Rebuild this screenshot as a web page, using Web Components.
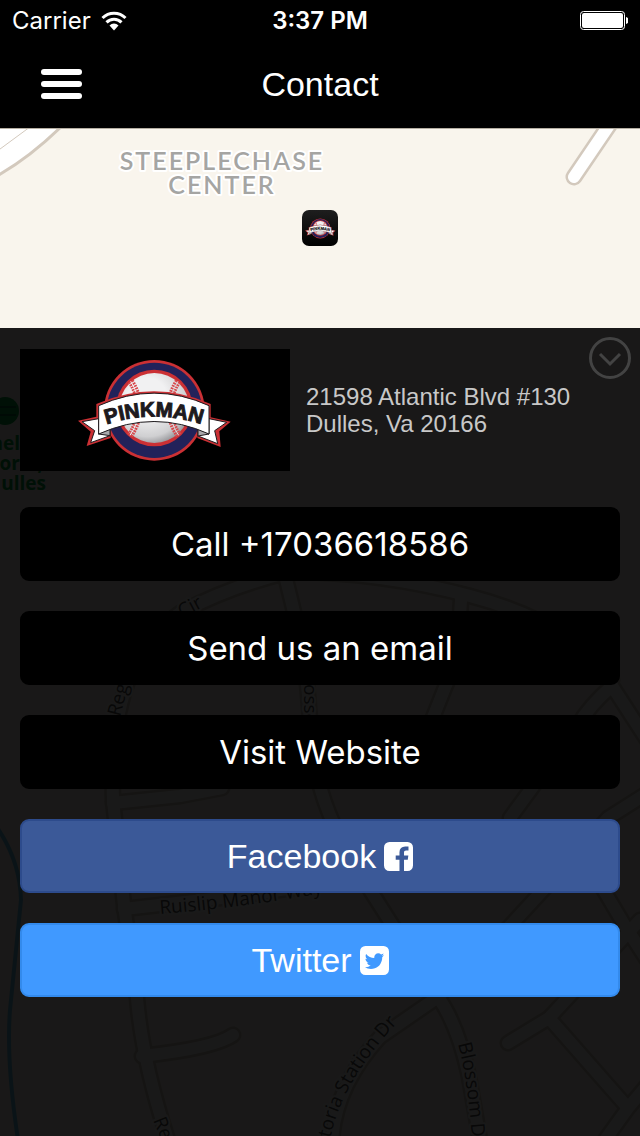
<!DOCTYPE html>
<html lang="en">
<head>
  <meta charset="utf-8">
  <meta name="viewport" content="width=device-width, initial-scale=1">
  <title>Contact</title>
  <style>
    body {
      margin: 0;
      background: #000;
      font-family: "Liberation Sans", Arial, sans-serif;
    }
  </style>
</head>
<body>
  <contact-page>
    <status-bar slot="top" carrier="Carrier" time="3:37 PM"></status-bar>
    <nav-bar slot="top">Contact</nav-bar>
    <street-map slot="map"></street-map>
    <map-pin slot="pin"></map-pin>
    <contact-panel>
      <team-logo slot="logo"></team-logo>
      <span slot="address">21598 Atlantic Blvd #130<br>Dulles, Va 20166</span>
      <action-link href="tel:+17036618586">Call +17036618586</action-link>
      <action-link href="mailto:info@example.com">Send us an email</action-link>
      <action-link href="#website">Visit Website</action-link>
      <action-link href="#facebook" kind="facebook">Facebook</action-link>
      <action-link href="#twitter" kind="twitter">Twitter</action-link>
    </contact-panel>
  </contact-page>

  <script>
    class ContactPage extends HTMLElement {
      constructor() {
        super();
        this.attachShadow({ mode: 'open' });
        this.shadowRoot.innerHTML = `
          <style>
            :host {
              display: flex;
              flex-direction: column;
              min-height: 100vh;
            }

            header {
              position: relative;
              z-index: 1;
              background: #000;
              box-shadow: 0 1px 0 #b5aea2;
            }

            main {
              position: relative;
              flex: 1;
              display: flex;
              flex-direction: column;
              overflow: hidden;
            }

            ::slotted(street-map) {
              position: absolute;
              inset: 0;
            }

            #window {
              position: relative;
              height: 200px;
              display: flex;
              align-items: center;
              justify-content: center;
            }

            ::slotted(contact-panel) {
              position: relative;
              flex: 1;
            }
          </style>

          <header><slot name="top"></slot></header>
          <main>
            <slot name="map"></slot>
            <div id="window"><slot name="pin"></slot></div>
            <slot></slot>
          </main>
        `;
      }
    }

    class StatusBar extends HTMLElement {
      constructor() {
        super();
        this.attachShadow({ mode: 'open' });
        this.shadowRoot.innerHTML = `
          <style>
            :host {
              display: grid;
              grid-template-columns: 1fr auto 1fr;
              align-items: center;
              box-sizing: border-box;
              height: 40px;
              padding: 2px 12px 0;
              color: #fff;
              font: 24px/38px Inter, sans-serif;
            }

            #left {
              display: flex;
              align-items: center;
              gap: 10px;
            }

            #time {
              font-weight: 600;
            }

            #battery {
              justify-self: end;
            }

            svg {
              display: block;
            }
          </style>

          <div id="left">
            <span id="carrier"></span>
            <svg width="26" height="20" viewBox="0 0 26 20" fill="none" stroke="#fff" stroke-width="3">
              <path d="M1.500 7a16.300 16.300 0 0 1 23 0"/>
              <path d="M5.500 11.400a10.500 10.500 0 0 1 15 0"/>
              <path d="M13 19.500l-4.500-5a6.300 6.300 0 0 1 9 0z" fill="#fff" stroke="none"/>
            </svg>
          </div>
          <span id="time"></span>
          <svg id="battery" width="48" height="20" viewBox="0 0 48 20">
            <rect x="0.5" y="0.5" width="44" height="18" rx="3" fill="none" stroke="#fff"/>
            <rect x="2" y="2" width="41" height="15" rx="2" fill="#fff"/>
            <path d="M46 6q2.500 .5 2.500 3.500t-2.500 3.500z" fill="#fff"/>
          </svg>
        `;
      }

      connectedCallback() {
        this.shadowRoot.querySelector('#carrier').textContent = this.getAttribute('carrier');
        this.shadowRoot.querySelector('#time').textContent = this.getAttribute('time');
      }
    }

    class NavBar extends HTMLElement {
      constructor() {
        super();
        this.attachShadow({ mode: 'open' });
        this.shadowRoot.innerHTML = `
          <style>
            :host {
              display: grid;
              grid-template-columns: 1fr auto 1fr;
              align-items: center;
              height: 88px;
              padding: 0 41px;
              color: #fff;
            }

            button {
              display: flex;
              flex-direction: column;
              gap: 6px;
              width: 41px;
              padding: 0;
              border: 0;
              background: none;
              cursor: pointer;
            }

            button i {
              width: 100%;
              height: 6px;
              border-radius: 3px;
              background: #fff;
            }

            h1 {
              margin: 0;
              font-size: 34px;
              font-weight: normal;
            }
          </style>

          <button type="button" aria-label="Menu"><i></i><i></i><i></i></button>
          <h1><slot></slot></h1>
        `;
      }
    }

    class StreetMap extends HTMLElement {
      constructor() {
        super();
        this.attachShadow({ mode: 'open' });

        // every road is drawn twice: a wide casing first, the white surface over it
        const roads = `
          <path d="M574 177L616 115"/>
          <path d="M180 613Q230 586 290 572Q380 572 470 596Q570 622 612 680"/>
          <path d="M285 575L294 612C315 690 305 740 321 790Q334 835 372 893L438 997Q458 1025 469 1077L480 1140"/>
          <path d="M461 600Q458 660 444 690L420 750"/>
          <path d="M180 613Q108 660 113 800L124 905L137 998Q142 1060 168 1140"/>
          <path d="M113 803L180 796L222 788"/>
          <path d="M124 909L230 897L350 880"/>
          <path d="M142 1056Q215 1048 233 1035"/>
          <path d="M612 686Q590 705 578 725L510 818"/>
          <path d="M612 686L660 760"/>
          <path d="M660 785L608 818L580 850L625 926L660 980"/>
          <path d="M580 850L510 926L438 997L380 1037Q336 1085 332 1140"/>
          <path d="M640 920L549 1018L508 1043"/>
          <path d="M549 1018L628 1108L605 1140M628 1108L660 1070"/>
        `;

        this.shadowRoot.innerHTML = `
          <style>
            :host {
              display: block;
              background: #f9f5ed;
            }

            svg {
              display: block;
              width: 100%;
              height: 100%;
            }

            .roads {
              fill: none;
              stroke-linecap: round;
              stroke-linejoin: round;
            }

            text {
              paint-order: stroke;
              stroke: #fff;
              stroke-width: 4px;
              stroke-linejoin: round;
            }

            .district {
              font: 600 25px/24px Lato, sans-serif;
              letter-spacing: 2px;
              fill: #a5a5a3;
              text-anchor: middle;
            }

            .street {
              font: 19px "Open Sans", sans-serif;
              fill: #555;
            }

            .park {
              font: 700 19px "Open Sans", sans-serif;
              fill: #00a03c;
              text-anchor: end;
              stroke: none;
            }
          </style>

          <svg viewBox="0 128 640 1008" preserveAspectRatio="xMidYMin slice">
            <defs>
              <path id="station" d="M329 1147Q338 1080 412 1008"/>
              <path id="blossom" d="M458 1044Q468 1080 473 1150"/>
              <path id="manor" d="M160 914Q240 908 330 892"/>
            </defs>

            <path d="M-5 177Q30 158 66 122L-5 110z" fill="#fff" stroke="#d3c9bd" stroke-width="3"/>
            <path d="M-4 152L34 124" stroke="#d3c9bd" fill="none"/>
            <path d="M-4 826Q20 860 21 900L10 1010Q6 1060 18 1140" stroke="#6bc0e6" stroke-width="4" fill="none"/>
            <g class="roads" stroke="#d3c9bd" stroke-width="17">${roads}</g>
            <g class="roads" stroke="#fff" stroke-width="12">${roads}</g>

            <text class="district" x="222" y="170">STEEPLECHASE</text>
            <text class="district" x="222" y="194">CENTER</text>

            <circle cx="5" cy="411" r="14" fill="#00a03c"/>
            <path d="M-6 407h22M-6 415h22" stroke="#063" stroke-width="2"/>
            <text class="park" x="20" y="450">nel</text>
            <text class="park" x="43" y="470">orts,</text>
            <text class="park" x="46" y="490">ulles</text>

            <text class="street" transform="translate(182 618) rotate(-28)">Cir</text>
            <text class="street" transform="translate(120 717) rotate(-75)">Reg</text>
            <text class="street" transform="translate(304 684) rotate(90)">osso</text>
            <text class="street" transform="translate(153 1120) rotate(68)">Re</text>
            <text class="street"><textPath href="#manor">Ruislip Manor Way</textPath></text>
            <text class="street"><textPath href="#station">ctoria Station Dr</textPath></text>
            <text class="street"><textPath href="#blossom">Blossom D</textPath></text>
          </svg>
        `;
      }
    }

    class TeamLogo extends HTMLElement {
      constructor() {
        super();
        this.attachShadow({ mode: 'open' });
        this.shadowRoot.innerHTML = `
          <style>
            :host {
              display: block;
              width: 155px;
            }

            svg {
              display: block;
              width: 100%;
            }

            text {
              font: 700 62px "Liberation Sans", Arial, sans-serif;
              fill: #1d1a1d;
              stroke: #1d1a1d;
              stroke-width: 3px;
              text-anchor: middle;
            }
          </style>

          <svg viewBox="22 22 465 315" role="img" aria-label="Pinkman">
            <defs>
              <radialGradient id="ball" cx="0.4" cy="0.35" r="0.7">
                <stop offset="0.4" stop-color="#f1f1f2"/>
                <stop offset="0.8" stop-color="#cfcfd1"/>
                <stop offset="1" stop-color="#8f8f93"/>
              </radialGradient>
              <path id="arch" d="M85 229Q250 166 415 229"/>
            </defs>

            <circle cx="251" cy="179" r="151" fill="#cb3034"/>
            <circle cx="251" cy="179" r="143" fill="#22225a"/>
            <circle cx="251" cy="172" r="115" fill="#cb3034"/>
            <circle cx="251" cy="172" r="105" fill="url(#ball)"/>

            <g fill="none" stroke="#d8474b">
              <path d="M180 92Q205 130 204 172Q205 215 178 254" stroke-width="20" stroke-dasharray="5 3"/>
              <path d="M322 92Q297 130 298 172Q297 215 324 254" stroke-width="20" stroke-dasharray="5 3"/>
              <path d="M180 92Q205 130 204 172Q205 215 178 254" stroke="#f1f1f2" stroke-width="3"/>
              <path d="M322 92Q297 130 298 172Q297 215 324 254" stroke="#dedee0" stroke-width="3"/>
            </g>

            <path d="M22 210L77 198L77 160Q251 84 420 160L420 200L480 213L446 242L450 289L380 262L382 232Q251 190 118 232L120 262L48 286L60 243z" fill="#cb3034"/>
            <g stroke="#1d1a1d" stroke-width="3" stroke-linejoin="round">
              <path d="M34 213L84 204V250L118 232V255L60 276L72 240z" fill="#fff"/>
              <path d="M468 215L415 204V250L382 232V256L441 279L432 240z" fill="#fff"/>
              <path d="M84 250L118 232V255z" fill="#a9a9ac"/>
              <path d="M415 250L382 232V256z" fill="#a9a9ac"/>
              <path d="M84 165Q251 90 415 165V250Q251 175 84 250z" fill="#fff"/>
            </g>
            <text><textPath href="#arch" startOffset="50%">PINKMAN</textPath></text>
          </svg>
        `;
      }
    }

    class MapPin extends HTMLElement {
      constructor() {
        super();
        this.attachShadow({ mode: 'open' });
        this.shadowRoot.innerHTML = `
          <style>
            :host {
              display: flex;
              align-items: center;
              justify-content: center;
              width: 36px;
              height: 36px;
              border-radius: 7px;
              background: linear-gradient(#1e1e1e, #000);
            }

            team-logo {
              width: 31px;
            }
          </style>

          <team-logo></team-logo>
        `;
      }
    }

    class ContactPanel extends HTMLElement {
      constructor() {
        super();
        this.attachShadow({ mode: 'open' });
        this.shadowRoot.innerHTML = `
          <style>
            :host {
              display: block;
              padding: 21px 20px;
              background: rgba(0, 0, 0, 0.9);
            }

            #collapse {
              position: absolute;
              top: 9px;
              right: 9px;
              padding: 0;
              border: 0;
              background: none;
              cursor: pointer;
            }

            #collapse svg {
              display: block;
            }

            #card {
              display: flex;
              align-items: center;
              gap: 16px;
              margin-bottom: 36px;
            }

            #logo {
              display: flex;
              align-items: center;
              justify-content: center;
              width: 270px;
              height: 122px;
              background: #000;
            }

            address {
              color: #c8c8c8;
              font-size: 24px;
              font-style: normal;
              line-height: 27px;
            }

            nav {
              display: flex;
              flex-direction: column;
              gap: 30px;
            }
          </style>

          <button id="collapse" type="button" aria-label="Collapse">
            <svg width="42" height="42" viewBox="0 0 42 42" fill="none" stroke="#434343" stroke-width="3">
              <circle cx="21" cy="21" r="19.500"/>
              <path d="M11 17l10 10 10-10"/>
            </svg>
          </button>
          <div id="card">
            <div id="logo"><slot name="logo"></slot></div>
            <address><slot name="address"></slot></address>
          </div>
          <nav><slot></slot></nav>
        `;
      }
    }

    const ICONS = {
      facebook: 'M1248 128q119 0 203.5 84.5t84.5 203.5v960q0 119-84.5 203.5t-203.5 84.5h-188v-595h199l30-232h-229v-148q0-56 23.5-84t91.5-28l122-1v-207q-63-9-178-9-136 0-217.5 80t-81.5 226v171h-200v232h200v595h-532q-119 0-203.5-84.5t-84.5-203.5v-960q0-119 84.5-203.5t203.5-84.5h960z',
      twitter: 'M1280 610q-56 25-121 34 68-40 93-117-65 38-134 51-61-66-153-66-87 0-148.5 61.5t-61.5 148.5q0 29 5 48-129-7-242-65t-192-155q-29 50-29 106 0 114 91 175-47-1-100-26v2q0 75 50 133.5t123 72.5q-29 8-51 8-13 0-39-4 21 63 74.5 104t121.5 42q-116 90-261 90-26 0-50-3 148 94 322 94 112 0 210-35.5t168-95 120.5-137 75-162 24.5-168.5q0-18-1-27 63-45 105-109zm256-194v960q0 119-84.5 203.5t-203.5 84.5h-960q-119 0-203.5-84.5t-84.5-203.5v-960q0-119 84.5-203.5t203.5-84.5h960q119 0 203.5 84.5t84.5 203.5z'
    };

    class ActionLink extends HTMLElement {
      constructor() {
        super();
        this.attachShadow({ mode: 'open' });
        this.shadowRoot.innerHTML = `
          <style>
            :host {
              display: block;
              --fill: #000;
              --edge: #000;
              font: 33px Inter, sans-serif;
            }

            :host([kind="facebook"]) {
              --fill: #3b5998;
              --edge: #2d4b8c;
            }

            :host([kind="twitter"]) {
              --fill: #4099ff;
              --edge: #338aec;
            }

            :host([kind]) {
              font: 34px "Liberation Sans", Arial, sans-serif;
            }

            a {
              display: flex;
              align-items: center;
              justify-content: center;
              gap: 8px;
              height: 70px;
              border: 2px solid var(--edge);
              border-radius: 9px;
              background: var(--fill);
              color: #fff;
              text-decoration: none;
            }
          </style>

          <a><span><slot></slot></span></a>
        `;
      }

      connectedCallback() {
        const link = this.shadowRoot.querySelector('a');
        link.href = this.getAttribute('href');

        const icon = ICONS[this.getAttribute('kind')];
        if (icon) {
          link.insertAdjacentHTML('beforeend', `
            <svg width="29" height="29" viewBox="0 128 1536 1536" fill="#fff"><path d="${icon}"/></svg>
          `);
        }
      }
    }

    customElements.define('contact-page', ContactPage);
    customElements.define('status-bar', StatusBar);
    customElements.define('nav-bar', NavBar);
    customElements.define('street-map', StreetMap);
    customElements.define('team-logo', TeamLogo);
    customElements.define('map-pin', MapPin);
    customElements.define('contact-panel', ContactPanel);
    customElements.define('action-link', ActionLink);
  </script>
</body>
</html>
